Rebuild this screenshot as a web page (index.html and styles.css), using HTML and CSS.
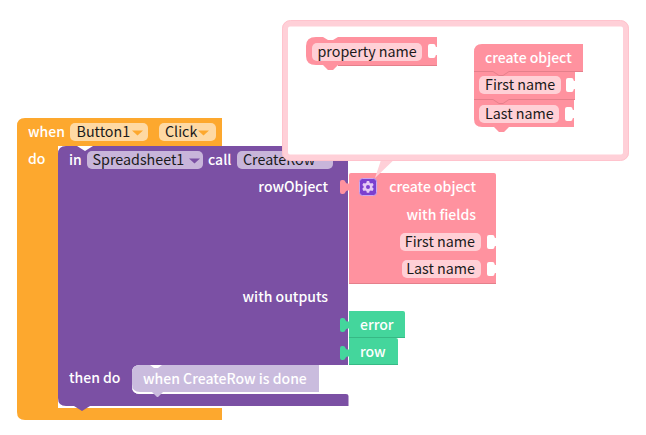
FILE: index.html
```html
<!DOCTYPE html>
<html lang="en">
<head>
    <meta charset="UTF-8">
    <title>Create row blocks</title>
    <link rel="stylesheet" href="styles.css">
</head>
<body>
    <svg class="workspace" width="646" height="435" viewBox="0 0 646 435" xmlns="http://www.w3.org/2000/svg" xmlns:xlink="http://www.w3.org/1999/xlink">
        <defs>
            <path id="socket" class="hole" d="M9 3H8.500Q7.500 3 7.500 2Q7.500 0 5.500 0H2Q0 0 0 2V12Q0 14 2 14H5.500Q7.500 14 7.500 12Q7.500 11 8.500 11H9Z"/>
            <path id="tab" d="M9 3.500H7.500Q6 3.500 5.500 2Q5 0 3 0H2Q0 0 0 2V12Q0 14 2 14H3Q5 14 5.500 12Q6 10.500 7.500 10.500H9Z"/>
            <path id="gear" d="M7.800 3h2.400l.4 1.700 1.200.7 1.700-.5 1.200 2.100-1.300 1.200v1.400l1.300 1.200-1.200 2.100-1.700-.5-1.200.7-.4 1.700H7.800l-.4-1.700-1.200-.7-1.700.5-1.200-2.100 1.300-1.200V8.200L3.300 7l1.200-2.100 1.700.5 1.200-.7z"/>
        </defs>

        <!-- when Button1.Click -->
        <path class="orange" d="M25 118H222V146H58V408H222V420H25Q17 420 17 412V126Q17 118 25 118Z"/>
        <rect class="field-orange" x="70" y="123" width="78" height="18" rx="5"/>
        <rect class="field-orange" x="159" y="123" width="57" height="18" rx="5"/>
        <path class="arrow-orange" d="M132 130.500h11l-5.500 5z"/>
        <path class="arrow-orange" d="M198 130.500h11l-5.500 5z"/>
        <text class="label" x="28" y="137">when</text>
        <text class="label" x="28" y="164">do</text>
        <text class="value" x="76.500" y="137">Button1</text>
        <text class="value" x="165" y="137">Click</text>

        <!-- call Spreadsheet1.CreateRow -->
        <path class="purple" d="M66 146H77L85 151L93 146H348V365H140Q132 365 132 372V386Q132 394 140 394H346Q348.500 394 348.500 396V406H90L82 411L74 406H66Q58 406 58 398V154Q58 146 66 146Z"/>
        <rect class="field-purple" x="87" y="151" width="116" height="18" rx="5"/>
        <rect class="field-purple" x="237" y="151" width="96" height="18" rx="5"/>
        <path class="arrow-purple" d="M189 158.500h11l-5.500 5z"/>
        <text class="label" x="69" y="165">in</text>
        <text class="label" x="208" y="165">call</text>
        <text class="value" x="92.500" y="165">Spreadsheet1</text>
        <text class="value" x="243" y="165">CreateRow</text>
        <text class="label end" x="328" y="192">rowObject</text>
        <text class="label end" x="328" y="302">with outputs</text>
        <text class="label" x="69" y="383">then do</text>

        <!-- when CreateRow is done, ghost statement -->
        <path class="gap" d="M132 386Q132 394 140 394H319V392H140Q133 392 132 386Z"/>
        <path class="ghost" d="M140 365H150L154 368H158L162 365H319V392H163L158 397H157L152 392H140Q132 392 132 384V373Q132 365 140 365Z"/>
        <text class="label" x="143" y="384">when CreateRow is done</text>

        <!-- output getters -->
        <path class="green" d="M349 311H403Q405 311 405 313V338H349Z"/>
        <path class="green-edge" d="M349 337H405V338H349Z"/>
        <use class="green" xlink:href="#tab" x="340" y="318"/>
        <path class="green" d="M349 338H396Q398 338 398 340V365H349Z"/>
        <path class="green-edge" d="M349 364H398V365H349Z"/>
        <use class="green" xlink:href="#tab" x="340" y="346"/>
        <text class="label" x="360" y="330">error</text>
        <text class="label" x="360" y="357">row</text>

        <!-- create object -->
        <path class="pink" d="M351 173H494Q496 173 496 175V283H349V175Q349 173 351 173Z"/>
        <path class="pink-edge" d="M349 283H496V284H349Z"/>
        <use class="pink" xlink:href="#tab" x="340" y="180"/>
        <rect class="gear-box" x="359.500" y="178.500" width="17" height="17" rx="3"/>
        <use class="gear" xlink:href="#gear" x="359" y="178"/>
        <circle class="gear-hole" cx="368" cy="187" r="2"/>
        <text class="label end" x="476" y="192">create object</text>
        <text class="label end" x="476" y="220">with fields</text>
        <rect class="field-pink" x="400" y="233" width="81" height="18" rx="5"/>
        <rect class="field-pink" x="402" y="260" width="79" height="18" rx="5"/>
        <text class="value end" x="475" y="247">First name</text>
        <text class="value end" x="475" y="274">Last name</text>
        <use xlink:href="#socket" x="487" y="235"/>
        <use xlink:href="#socket" x="487" y="262"/>

        <!-- mutator bubble -->
        <path class="bubble-tail" d="M383 154H400L375 178Z"/>
        <rect class="bubble" x="285" y="23.500" width="341" height="134" rx="5"/>
        <rect class="bubble-edge" x="282.500" y="20.500" width="346" height="140" rx="8"/>

        <path class="pink" d="M316 37H323L328 40H333L338 37H437V65H338L333 70H328L323 65H316Q306 65 306 56V46Q306 37 316 37Z"/>
        <path class="pink-edge" d="M338 65H437V66H338Z"/>
        <rect class="field-pink" x="312" y="43" width="110" height="18" rx="5"/>
        <text class="value" x="317.500" y="57">property name</text>
        <use xlink:href="#socket" x="428" y="44"/>

        <path class="pink" d="M482 44H583V71H575V100H574V127H509L504 132H499L494 127H482Q474 127 474 119V52Q474 44 482 44Z"/>
        <path class="pink-edge" d="M474 71H493L499 75H503L509 71H583V72H509L503 76H499L493 72H474Z"/>
        <path class="pink-edge" d="M474 99H493L499 103H503L509 99H575V100H509L503 104H499L493 100H474Z"/>
        <rect class="field-pink" x="479" y="76" width="82" height="18" rx="5"/>
        <rect class="field-pink" x="479" y="105" width="80" height="18" rx="5"/>
        <text class="label" x="485" y="63">create object</text>
        <text class="value" x="485" y="90">First name</text>
        <text class="value" x="485" y="119">Last name</text>
        <use xlink:href="#socket" x="566" y="78"/>
        <use xlink:href="#socket" x="565" y="107"/>
    </svg>
</body>
</html>
```

FILE: styles.css
```css
body {
    margin: 0;
    background: #fff;
    overflow: hidden;
}
.workspace {
    display: block;
    font-family: "Noto Sans CJK SC", "Noto Sans", sans-serif;
}
.label {
    fill: #fff;
    font-size: 14px;
    font-weight: 500;
}
.value {
    fill: #1a1a1a;
    font-size: 14.300px;
}
.end {
    text-anchor: end;
}
.hole {
    fill: #fff;
}
.gap {
    fill: #fff;
}
.orange {
    fill: #fda82e;
}
.field-orange {
    fill: #fed9a4;
}
.arrow-orange {
    fill: #fda82e;
}
.purple {
    fill: #7b50a4;
}
.field-purple {
    fill: #c8b5da;
}
.arrow-purple {
    fill: #7b50a4;
}
.ghost {
    fill: #cabcde;
}
.green {
    fill: #44d69c;
}
.green-edge {
    fill: #37b985;
}
.pink {
    fill: #ff929f;
}
.pink-edge {
    fill: #e57f8b;
}
.field-pink {
    fill: #ffd0d6;
}
.gear-box {
    fill: #7b3fd0;
    stroke: #c9a6ee;
}
.gear {
    fill: #e5c9f5;
}
.gear-hole {
    fill: #7b3fd0;
}
.bubble {
    fill: #fff;
    stroke: #ffd0d8;
    stroke-width: 6;
}
.bubble-tail {
    fill: #ffd0d8;
}
.bubble-edge {
    fill: none;
    stroke: #ffc3cd;
}
```
